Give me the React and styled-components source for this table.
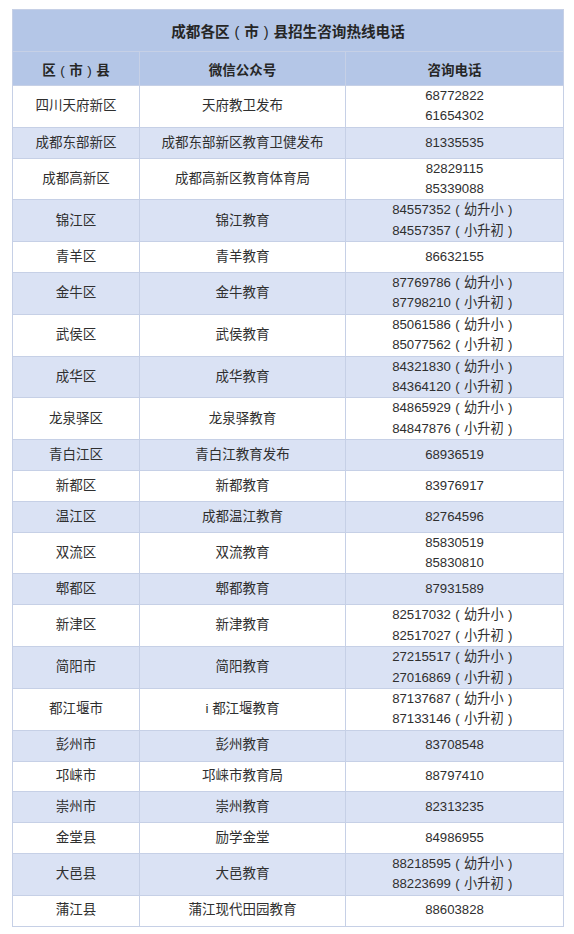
import React from 'react';
import styled, { createGlobalStyle } from 'styled-components';

const rows = [
  ['四川天府新区', '天府教卫发布', ['68772822', '61654302']],
  ['成都东部新区', '成都东部新区教育卫健发布', ['81335535']],
  ['成都高新区', '成都高新区教育体育局', ['82829115', '85339088']],
  ['锦江区', '锦江教育', ['84557352（幼升小）', '84557357（小升初）']],
  ['青羊区', '青羊教育', ['86632155']],
  ['金牛区', '金牛教育', ['87769786（幼升小）', '87798210（小升初）']],
  ['武侯区', '武侯教育', ['85061586（幼升小）', '85077562（小升初）']],
  ['成华区', '成华教育', ['84321830（幼升小）', '84364120（小升初）']],
  ['龙泉驿区', '龙泉驿教育', ['84865929（幼升小）', '84847876（小升初）']],
  ['青白江区', '青白江教育发布', ['68936519']],
  ['新都区', '新都教育', ['83976917']],
  ['温江区', '成都温江教育', ['82764596']],
  ['双流区', '双流教育', ['85830519', '85830810']],
  ['郫都区', '郫都教育', ['87931589']],
  ['新津区', '新津教育', ['82517032（幼升小）', '82517027（小升初）']],
  ['简阳市', '简阳教育', ['27215517（幼升小）', '27016869（小升初）']],
  ['都江堰市', 'i 都江堰教育', ['87137687（幼升小）', '87133146（小升初）']],
  ['彭州市', '彭州教育', ['83708548']],
  ['邛崃市', '邛崃市教育局', ['88797410']],
  ['崇州市', '崇州教育', ['82313235']],
  ['金堂县', '励学金堂', ['84986955']],
  ['大邑县', '大邑教育', ['88218595（幼升小）', '88223699（小升初）']],
  ['蒲江县', '蒲江现代田园教育', ['88603828']],
];

const GlobalStyle = createGlobalStyle`
  body {
    margin: 0;
    background: #ffffff;
    font-family: "Liberation Sans", "Noto Sans CJK SC", sans-serif;
    color: #2f2f2f;
  }
`;

const Page = styled.div`
  padding: 9px 11px 10px 12px;
`;

const Table = styled.table`
  width: 551px;
  border-collapse: collapse;
  table-layout: fixed;
  border: 1px solid #c6d0e6;
`;

const Col = styled.col`
  width: ${(p) => p.$w}px;
`;

const TitleCell = styled.th`
  height: 41px;
  padding: 0;
  background: #b4c6e7;
  font-size: 14.6px;
  font-weight: bold;
  color: #262626;
  text-align: center;
  border: 1px solid #c6d0e6;
`;

const HeadCell = styled.th`
  height: 33px;
  padding: 0;
  background: #b4c6e7;
  font-size: 13.5px;
  font-weight: bold;
  color: #262626;
  text-align: center;
  border: 1px solid #c6d0e6;
`;

const Row = styled.tr`
  background: ${(p) => (p.$striped ? '#dae2f4' : '#ffffff')};
`;

const Cell = styled.td`
  height: 29.8px;
  padding: 0 4px;
  font-size: 13.5px;
  line-height: 20.4px;
  text-align: center;
  vertical-align: middle;
  border: 1px solid #c6d0e6;
`;

const Phone = styled.div`
  font-size: 13.2px;
  white-space: nowrap;
`;

// full-width bracket drawn centred in its em box, as in the source image
const Paren = styled.span`
  display: inline-block;
  width: 1em;
  line-height: 1;
  text-align: center;
  font-weight: normal;
`;

const withParens = (text) =>
  text.split(/([（）])/).map((part, i) => {
    if (part === '（') return <Paren key={i}>(</Paren>;
    if (part === '）') return <Paren key={i}>)</Paren>;
    return part;
  });

export default function App() {
  return (
    <Page>
      <GlobalStyle />
      <Table>
        <colgroup>
          <Col $w={127} />
          <Col $w={206} />
          <Col $w={218} />
        </colgroup>
        <thead>
          <tr>
            <TitleCell colSpan={3}>{withParens('成都各区（市）县招生咨询热线电话')}</TitleCell>
          </tr>
          <tr>
            <HeadCell>{withParens('区（市）县')}</HeadCell>
            <HeadCell>微信公众号</HeadCell>
            <HeadCell>咨询电话</HeadCell>
          </tr>
        </thead>
        <tbody>
          {rows.map(([area, account, phones], i) => (
            <Row key={area} $striped={i % 2 === 1}>
              <Cell>{area}</Cell>
              <Cell>{account}</Cell>
              <Cell>
                {phones.map((p) => (
                  <Phone key={p}>{withParens(p)}</Phone>
                ))}
              </Cell>
            </Row>
          ))}
        </tbody>
      </Table>
    </Page>
  );
}
